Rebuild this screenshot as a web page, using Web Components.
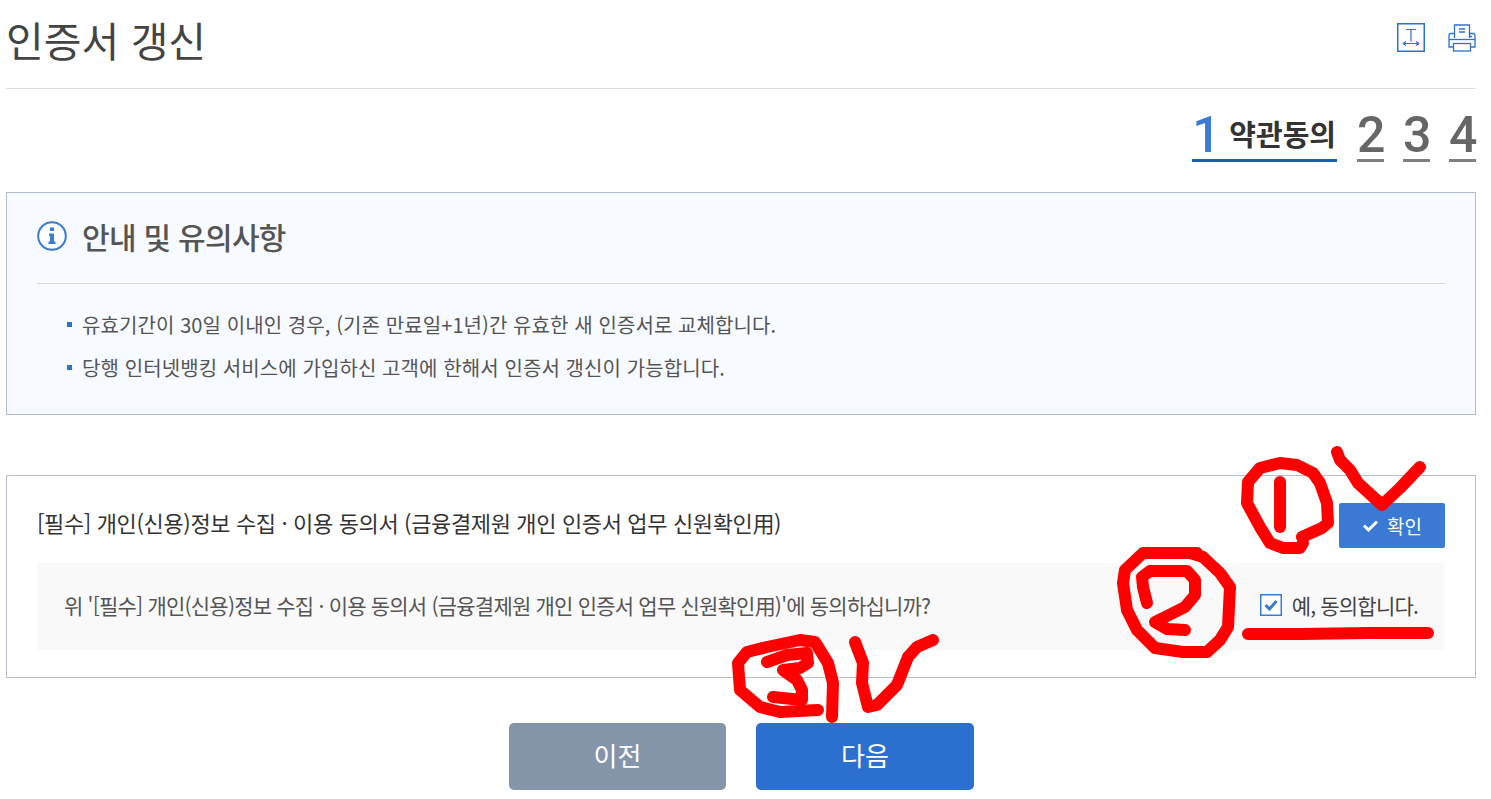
<!DOCTYPE html>
<html lang="ko">
<head>
<meta charset="utf-8">
<title>인증서 갱신</title>
<style>
html, body { margin: 0; background: #fff; }
body { font-family: "Noto Sans CJK KR", "Noto Sans", sans-serif; color: #444; }
</style>
</head>
<body>
<cert-page>
    <page-head slot="head">인증서 갱신</page-head>
    <step-nav slot="steps" current="1" label="약관동의" total="4"></step-nav>
    <notice-box slot="notice" heading="안내 및 유의사항">
        <li>유효기간이 30일 이내인 경우, (기존 만료일+1년)간 유효한 새 인증서로 교체합니다.</li>
        <li>당행 인터넷뱅킹 서비스에 가입하신 고객에 한해서 인증서 갱신이 가능합니다.</li>
    </notice-box>
    <consent-box slot="consent" heading="[필수] 개인(신용)정보 수집 · 이용 동의서 (금융결제원 개인 인증서 업무 신원확인用)"
        question="위 '[필수] 개인(신용)정보 수집 · 이용 동의서 (금융결제원 개인 인증서 업무 신원확인用)'에 동의하십니까?"
        answer="예, 동의합니다."></consent-box>
    <nav-btn slot="actions" kind="prev">이전</nav-btn>
    <nav-btn slot="actions" kind="next">다음</nav-btn>
</cert-page>
<scribble-layer></scribble-layer>

<script>
customElements.define('cert-page', class extends HTMLElement {
    constructor() {
        super();
        this.attachShadow({ mode: 'open' }).innerHTML = `
        <style>
        :host { display: block; width: 1470px; margin-left: 6px; }
        #actions { display: flex; justify-content: center; gap: 30px; margin-top: 45px; padding-left: 1px; }
        </style>
        <slot name="head"></slot>
        <slot name="steps"></slot>
        <slot name="notice"></slot>
        <slot name="consent"></slot>
        <div id="actions"><slot name="actions"></slot></div>
        `;
    }
});

customElements.define('page-head', class extends HTMLElement {
    constructor() {
        super();
        this.attachShadow({ mode: 'open' }).innerHTML = `
        <style>
        :host { display: flex; justify-content: space-between; height: 88px; border-bottom: 1px solid #ddd; }
        h1 { margin: 0; font-size: 41px; line-height: 54px; padding-top: 12px; font-weight: 400; color: #444; }
        #tools { display: flex; gap: 23px; padding-top: 23px; }
        svg { display: block; fill: none; stroke: #2e71cd; }
        </style>
        <h1><slot></slot></h1>
        <div id="tools">
            <svg width="28" height="29" viewBox="0 0 28 29" stroke-width="1.2">
                <rect x=".75" y=".75" width="26.500" height="27.500" stroke-width="1.500"/>
                <path d="M9 6.500h10M14 6.500v12M6 20.500h16M6 20.500l3-2M6 20.500l3 2M22 20.500l-3-2M22 20.500l-3 2"/>
            </svg>
            <svg width="28" height="28" viewBox="0 0 28 28" stroke-width="1.300" style="margin-top:1px">
                <path d="M6.500 14V1h15v13M1 11.500q0-2 2-2h3.500M21.500 9.500H25q2 0 2 2V23h-5M6 23H1V11.500"/>
                <path d="M1 15.500h26"/>
                <rect x="5.500" y="19.500" width="17" height="7.500"/>
                <path d="M11 5h6M11 8h6" stroke-width="1.500"/>
                <path d="M21 12.500h3" stroke-width="1.500"/>
            </svg>
        </div>
        `;
    }
});

customElements.define('step-nav', class extends HTMLElement {
    connectedCallback() {
        const total = +this.getAttribute('total');
        const current = +this.getAttribute('current');
        const items = [];
        for (let i = 1; i <= total; i++) {
            items.push(i === current
                ? `<div class="step on"><b>${i}</b><span>${this.getAttribute('label')}</span></div>`
                : `<div class="step"><b>${i}</b></div>`);
        }
        this.attachShadow({ mode: 'open' }).innerHTML = `
        <style>
        :host { display: flex; justify-content: flex-end; gap: 19px; height: 72px; }
        .step { display: flex; align-items: center; height: 48px; margin-top: 25px; border-bottom: 3px solid #808080; box-sizing: border-box; }
        .on { border-color: #1c5dac; margin-right: 1px; padding-right: 1px; }
        b { font: 500 50px/45px Roboto, "Liberation Sans", sans-serif; color: #666; width: 27px; margin-top: -2px; text-align: center; }
        .on b { color: #3a7bd5; }
        span { margin-left: 10px; padding-bottom: 8px; font-size: 29px; font-weight: 700; color: #333; }
        </style>
        ${items.join('')}
        `;
    }
});

customElements.define('notice-box', class extends HTMLElement {
    connectedCallback() {
        this.attachShadow({ mode: 'open' }).innerHTML = `
        <style>
        :host { display: block; height: 223px; box-sizing: border-box; margin-top: 31px; padding: 0 30px; background: #f7faff; border: 1px solid #b2bbd6; }
        h2 { display: flex; align-items: center; gap: 15px; height: 91px; box-sizing: border-box; padding-bottom: 5px; margin: 0; font-size: 30px; font-weight: 500; color: #555; border-bottom: 1px solid #d5d9de; letter-spacing: -.7px; }
        svg { display: block; flex: none; }
        ul { list-style: none; margin: 0; padding: 19px 0 0 30px; }
        ::slotted(li) { position: relative; padding-left: 15px; font-size: 20px; line-height: 43px; letter-spacing: .09px; color: #555; }
        ::slotted(li)::before { content: ""; position: absolute; left: 0; top: 19px; width: 5px; height: 5px; background: #2e71cd; }
        </style>
        <h2>
            <svg width="30" height="30" viewBox="0 0 30 30">
                <circle cx="15" cy="15" r="13.800" fill="#fff" stroke="#3a7bd5" stroke-width="2"/>
                <path fill="#3a7bd5" d="M13 6.500h4v3.500h-4zM12 12.500h5v8h1.500v2.500h-7v-2.500H13v-5.500h-1z"/>
            </svg>
            ${this.getAttribute('heading')}
        </h2>
        <ul><slot></slot></ul>
        `;
    }
});

customElements.define('consent-box', class extends HTMLElement {
    connectedCallback() {
        this.attachShadow({ mode: 'open' }).innerHTML = `
        <style>
        :host { display: block; height: 203px; box-sizing: border-box; margin-top: 60px; padding: 27px 30px 0; border: 1px solid #bbbccc; }
        #top { display: flex; justify-content: space-between; align-items: center; height: 45px; font-size: 22px; color: #333; letter-spacing: -.36px; }
        #top > span { padding-bottom: 7px; }
        button { display: flex; align-items: center; justify-content: center; gap: 8px; width: 106px; height: 45px; padding: 0; border: 0; border-radius: 2px; background: #3a7ad4; color: #fff; font: 400 19px "Noto Sans CJK KR", sans-serif; }
        button svg { display: block; }
        #agree { display: flex; justify-content: space-between; align-items: center; height: 87px; margin-top: 15px; padding: 0 27px; background: #f9f9f9; font-size: 21px; color: #555; letter-spacing: -.79px; }
        #agree > span { padding-bottom: 4px; }
        label { display: flex; align-items: center; gap: 10px; color: #444; padding-bottom: 4px; letter-spacing: -.8px; }
        #box { display: block; flex: none; }
        </style>
        <div id="top">
            <span>${this.getAttribute('heading')}</span>
            <button type="button">
                <svg width="17" height="13" viewBox="0 0 17 13"><path d="M2 6.500l4.500 4.500L15 2.500" fill="none" stroke="#fff" stroke-width="3"/></svg>
                확인
            </button>
        </div>
        <div id="agree">
            <span>${this.getAttribute('question')}</span>
            <label>
                <svg id="box" width="22" height="22" viewBox="0 0 22 22">
                    <rect x=".75" y=".75" width="20.500" height="20.500" fill="#fff" stroke="#3a7bd5" stroke-width="1.500"/>
                    <path d="M5.500 11l4 4 7-8" fill="none" stroke="#3a7bd5" stroke-width="3"/>
                </svg>
                ${this.getAttribute('answer')}
            </label>
        </div>
        `;
    }
});

customElements.define('nav-btn', class extends HTMLElement {
    constructor() {
        super();
        this.attachShadow({ mode: 'open' }).innerHTML = `
        <style>
        :host { display: flex; align-items: center; justify-content: center; width: 217px; height: 67px; box-sizing: border-box; padding-bottom: 4px; border-radius: 5px; color: #fff; font-size: 26px; background: #8495aa; }
        :host([kind="next"]) { width: 218px; background: #2c70cf; }
        </style>
        <slot></slot>
        `;
    }
});

// red pen marks drawn over the screenshot
customElements.define('scribble-layer', class extends HTMLElement {
    constructor() {
        super();
        const marks = [
            '1302,537 1322,528 1328,523 1327,503 1320,483 1313,473 1297,465 1280,463 1260,468 1248,482 1247,503 1260,527 1270,543 1283,548 1300,548 1303,543',
            '1280,482 1280,527',
            '1337,452 1340,460 1350,470 1358,483 1382,505 1400,488 1420,467',
            '1197,553 1180,553 1143,553 1125,570 1123,583 1127,610 1137,630 1155,648 1183,652 1207,652 1220,640 1228,627 1230,587 1220,573 1203,557 1190,553',
            '1147,603 1143,587 1142,577 1150,571 1187,571 1195,580 1195,595 1185,607 1155,622 1167,629 1185,630',
            '1248,634 1300,634 1370,633 1428,633',
            '767,662 787,655 807,653 808,663 800,668 783,670 797,680 802,690 802,700 773,697',
            '818,710 780,712 760,707 740,690 738,663 747,652 767,647 800,640 815,642 828,663 833,683 832,717',
            '855,642 863,663 862,683 868,707 877,705 897,685 908,657 917,647 933,640'
        ];
        this.attachShadow({ mode: 'open' }).innerHTML = `
        <style>
        :host { position: absolute; left: 0; top: 0; width: 1491px; height: 799px; pointer-events: none; }
        svg { display: block; fill: none; stroke: #f00; stroke-width: 12; stroke-linecap: round; stroke-linejoin: round; }
        </style>
        <svg width="1491" height="799" viewBox="0 0 1491 799">
            ${marks.map(m => `<polyline points="${m}"/>`).join('')}
        </svg>
        `;
    }
});
</script>
</body>
</html>
